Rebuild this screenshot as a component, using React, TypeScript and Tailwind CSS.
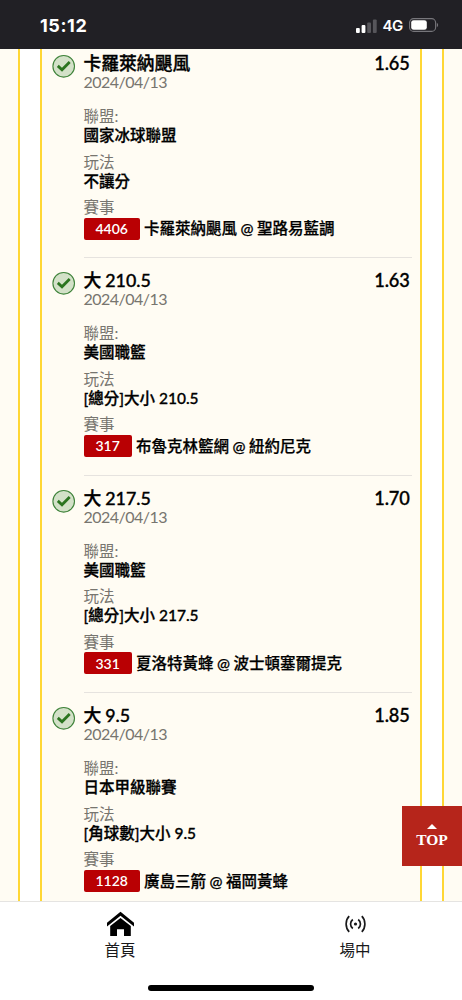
type Bet = {
  pick: string;
  odds: string;
  league: string;
  market: string;
  code: string;
  match: string;
};

const bets: Bet[] = [
  { pick: '卡羅萊納颶風', odds: '1.65', league: '國家冰球聯盟', market: '不讓分', code: '4406', match: '卡羅萊納颶風 @ 聖路易藍調' },
  { pick: '大 210.5', odds: '1.63', league: '美國職籃', market: '[總分]大小 210.5', code: '317', match: '布魯克林籃網 @ 紐約尼克' },
  { pick: '大 217.5', odds: '1.70', league: '美國職籃', market: '[總分]大小 217.5', code: '331', match: '夏洛特黃蜂 @ 波士頓塞爾提克' },
  { pick: '大 9.5', odds: '1.85', league: '日本甲級聯賽', market: '[角球數]大小 9.5', code: '1128', match: '廣島三箭 @ 福岡黃蜂' },
];

function StatusBar() {
  return (
    <header className="z-10 flex h-[49px] shrink-0 items-center justify-between bg-[#212025] pl-[40px] pr-[23px] pt-[2px] text-white font-['Inter',sans-serif]">
      <span className="text-[18px] font-bold leading-none tracking-[0.6px]">15:12</span>
      <div className="flex items-center">
        <svg width="21" height="14" viewBox="0 0 21 14">
          <rect x="0" y="9" width="3.8" height="5" rx="1" fill="#fff" />
          <rect x="5.6" y="6" width="3.8" height="8" rx="1" fill="#fff" />
          <rect x="11.2" y="3.4" width="3.8" height="10.6" rx="1" fill="#57565b" />
          <rect x="16.9" y="0.6" width="3.8" height="13.4" rx="1" fill="#57565b" />
        </svg>
        <span className="ml-[5.500px] w-[20.500px] text-[15px] font-semibold leading-none tracking-[-0.4px]">4G</span>
        <svg className="-mt-[1px] ml-[6px]" width="30" height="14" viewBox="0 0 30 14">
          <rect x="0.6" y="0.6" width="26" height="12.8" rx="4" fill="none" stroke="#77767b" strokeWidth="1.1" />
          <rect x="2.2" y="2.2" width="15.6" height="9.6" rx="2.4" fill="#fff" />
          <path d="M27.800 4.800C29.600 5.500 29.600 8.500 27.800 9.200Z" fill="#77767b" />
        </svg>
      </div>
    </header>
  );
}

function Check() {
  return (
    <svg className="mt-[13px] shrink-0" width="24" height="24" viewBox="0 0 24 24">
      <circle cx="11.700" cy="12.300" r="10.8" fill="#d3e1c8" stroke="#3f833a" strokeWidth="1.1" />
      <path d="M5.800 11.900L10 15.700L17.700 8" fill="none" stroke="#2b741f" strokeWidth="2.8" />
    </svg>
  );
}

function Field({ label, value }: { label: string; value: string }) {
  return (
    <div className="mb-[7.500px]">
      <div className="h-[18px] text-[15.500px] leading-[18px] text-[#77756f]">{label}</div>
      <div className="h-[20px] text-[15.500px] font-medium leading-[20px] [-webkit-text-stroke:0.3px_black]">{value}</div>
    </div>
  );
}

function BetRow({ bet }: { bet: Bet }) {
  return (
    <article className="flex h-[217.400px] shrink-0 pl-[9.500px] pr-[8px]">
      <Check />
      <div className="ml-[8px] min-w-0 grow border-b border-[#e6e3df] pt-[12px]">
        <div className="flex h-[20px] justify-between pr-[2.500px] text-[17.800px] font-medium leading-[20px] [-webkit-text-stroke:0.35px_black]">
          <span className="[word-spacing:-0.5px]">{bet.pick}</span>
          <span className="text-[18.200px] tracking-[-0.2px]">{bet.odds}</span>
        </div>
        <div className="mb-[17px] h-[17px] text-[16px] leading-[17px] tracking-[-0.52px] text-[#77756f]">2024/04/13</div>
        <Field label="聯盟:" value={bet.league} />
        <Field label="玩法" value={bet.market} />
        <div className="h-[19px] text-[15.500px] leading-[18px] text-[#77756f]">賽事</div>
        <div className="flex h-[23px] items-center whitespace-nowrap">
          <span className="flex h-[22px] items-center rounded-[2px] bg-[#b90003] px-[12px] text-[14px] font-semibold text-white">{bet.code}</span>
          <span className="ml-[4px] pt-[1px] text-[15.500px] font-medium [-webkit-text-stroke:0.25px_black] [word-spacing:-0.4px]">{bet.match}</span>
        </div>
      </div>
    </article>
  );
}

export default function App() {
  return (
    <div className="relative flex h-[1000px] w-[462px] flex-col overflow-hidden bg-white text-black font-['Lato','Noto_Sans_CJK_TC',sans-serif]">
      <StatusBar />
      <main className="flex min-h-0 grow overflow-hidden bg-[#fffcf3] pl-[18px] pr-[18px]">
        <div className="flex grow border-x-2 border-[#ffd735] bg-white px-[20px]">
          <div className="flex min-w-0 grow flex-col border-x-2 border-[#ffd735] bg-[#fffcf3]">
            <div className="-mt-[8px] flex flex-col">
              {bets.map((bet) => (
                <BetRow key={bet.code} bet={bet} />
              ))}
            </div>
          </div>
        </div>
      </main>
      <a className="absolute right-0 top-[806px] flex h-[60px] w-[60px] flex-col items-center bg-[#b6251b] pt-[18px] text-white">
        <svg width="10" height="5" viewBox="0 0 10 5">
          <path d="M5 0L10 5H0Z" fill="#fff" />
        </svg>
        <span className="mt-[3px] font-['Liberation_Serif',serif] text-[15.500px] font-bold leading-[16px]">TOP</span>
      </a>
      <nav className="relative z-10 flex h-[99px] shrink-0 border-t border-[#e5e4e2] bg-white text-[15.500px] text-[#19191b]">
        <div className="flex w-[240px] shrink-0 flex-col items-center pt-[9px]">
          <svg width="28" height="26" viewBox="0 0 28 26">
            <path d="M14.500 .8L28 11.800V15.600L14.500 4.800L1 15.600V11.800Z" fill="#000" />
            <path d="M14.500 7L24.800 15V25H18V18.300H11V25H4.200V15Z" fill="#000" />
          </svg>
          <span className="mt-[3px] leading-[20px]">首頁</span>
        </div>
        <div className="flex w-[230px] shrink-0 flex-col items-center pt-[13px]">
          <svg width="22" height="18" viewBox="0 0 22 18" fill="none" stroke="#19191b" strokeWidth="1.700">
            <circle cx="11.500" cy="9" r="1.600" fill="#19191b" stroke="none" />
            <path d="M5.200 1.200C1.100 5.200 1.100 12.800 5.200 16.800M17.800 1.200C21.900 5.200 21.900 12.800 17.800 16.800M8.800 4.500C5.800 6.900 5.800 11.100 8.800 13.500M14.200 4.500C17.200 6.900 17.200 11.100 14.200 13.500" />
          </svg>
          <span className="mt-[7px] leading-[20px]">場中</span>
        </div>
        <div className="absolute bottom-[9px] left-[148px] h-[6px] w-[166px] rounded-full bg-black" />
      </nav>
    </div>
  );
}
